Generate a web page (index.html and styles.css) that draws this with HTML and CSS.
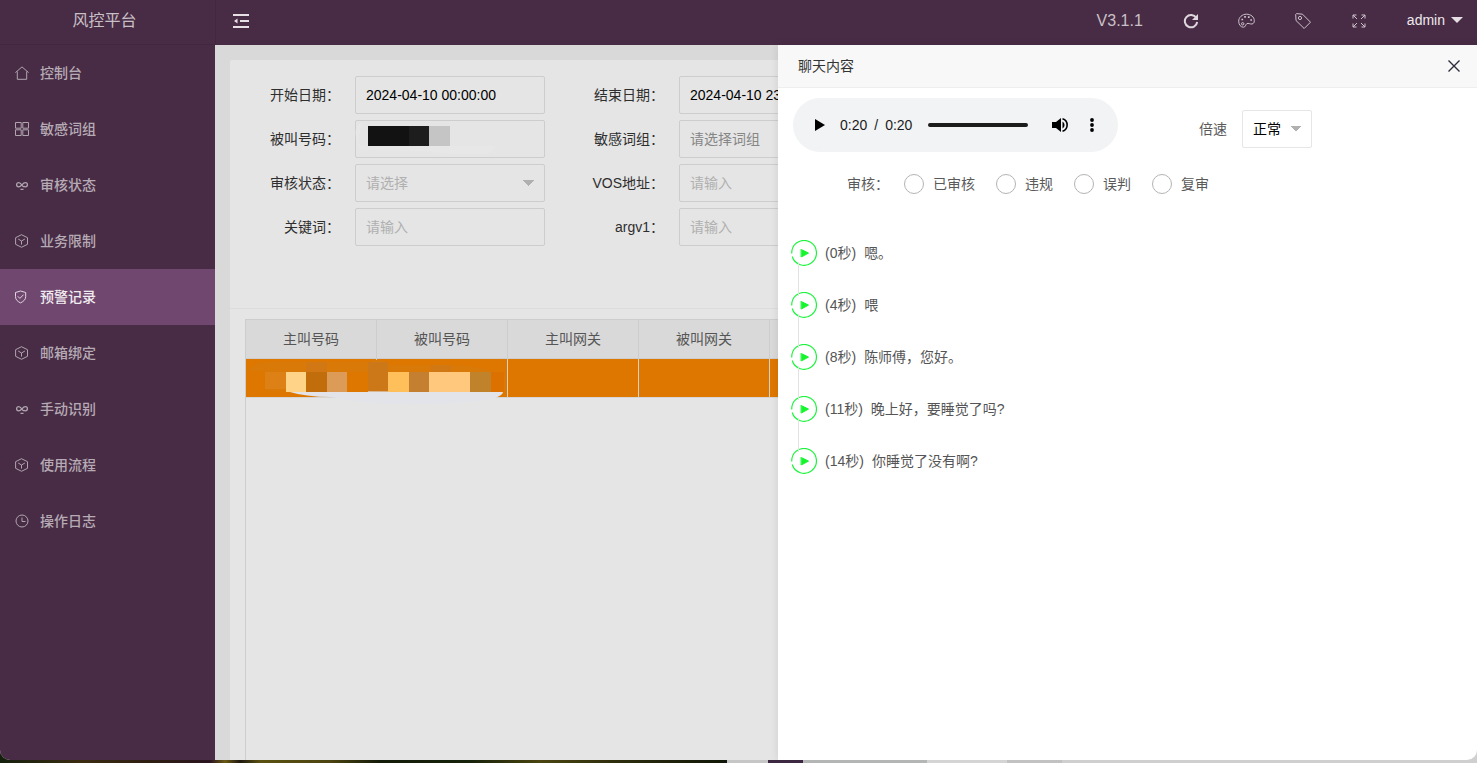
FILE: index.html
```
<!DOCTYPE html>
<html lang="zh-CN">
<head>
    <meta charset="UTF-8">
    <meta name="viewport" content="width=device-width, initial-scale=1.0">
    <title>风控平台</title>
    <link rel="stylesheet" href="styles.css">
</head>
<body>
    <!-- Shared icons -->
    <svg class="sprite" aria-hidden="true">
        <symbol id="i-cube" viewBox="0 0 14 14">
            <path d="M6.500 .7 12.500 3.700v6.600L6.500 13.300 .6 10.300V3.700z M3.200 5 6.500 7l3.400-2 M6.500 7v3.600"/>
        </symbol>
        <symbol id="i-link" viewBox="0 0 14 14">
            <path d="M9.600 8.300C8.700 9.200 7.800 8.300 7 7.200 5.900 5.700 5 4.700 3.700 4.700a2.100 2.100 0 0 0 0 4.200c1.300 0 2.200-.9 3.300-2.100 1.100-1.300 2-2.100 3.300-2.100a2.100 2.100 0 0 1 0 4.200c-.7 0-1.200-.2-1.700-.6 M5.500 11.300h3" stroke-width="1.300"/>
        </symbol>
        <symbol id="i-play" viewBox="0 0 26 26">
            <path d="M1.200 16.500A12.400 12.400 0 1 0 .9 10.500L.7 13.500" fill="none" stroke="#1cf53c" stroke-width="1.200"/>
            <path d="M10.300 9.500 17.500 13.100 10.300 17z" fill="#14f52e" stroke="#14f52e" stroke-linejoin="round"/>
            <path d="M9.700 9v8" stroke="#8dfb9a" stroke-width="1"/>
        </symbol>
    </svg>

    <div class="window">
        <!-- Side menu -->
        <aside class="side">
            <div class="logo">风控平台</div>
            <nav class="menu">
                <a href="#"><svg viewBox="0 0 14 14"><path d="M.4 6.600 7 .9l6.600 5.700 M2.300 5.500v7.800h9.400V5.500"/></svg>控制台</a>
                <a href="#"><svg viewBox="0 0 14 14"><path d="M.5.5h5.700v5.700H.5z M7.800.5h5.700v5.700H7.800z M.5 7.800h5.700v5.700H.5z M7.800 7.800h5.700v5.700H7.800z"/></svg>敏感词组</a>
                <a href="#"><svg><use href="#i-link"/></svg>审核状态</a>
                <a href="#"><svg><use href="#i-cube"/></svg>业务限制</a>
                <a href="#" class="active"><svg viewBox="0 0 14 14"><path d="M5.500 1 10.700 2.500v4.200c0 2.800-2 4.600-5.200 6.200C2.300 11.300.5 9.500.5 6.700V2.500z M2.800 6.300 4.900 8.400 8.500 4.700"/></svg>预警记录</a>
                <a href="#"><svg><use href="#i-cube"/></svg>邮箱绑定</a>
                <a href="#"><svg><use href="#i-link"/></svg>手动识别</a>
                <a href="#"><svg><use href="#i-cube"/></svg>使用流程</a>
                <a href="#"><svg viewBox="0 0 14 14"><path d="M7 1a6 6 0 1 0 0 12A6 6 0 1 0 7 1z M7 3.500V7.500h3.500"/></svg>操作日志</a>
            </nav>
        </aside>

        <div class="main">
            <header class="header">
                <button class="icon-btn" aria-label="收起菜单">
                    <svg width="16" height="14" viewBox="0 0 16 14"><path d="M0 1h16 M7 7h9 M0 13h16" fill="none" stroke="#e6e0e5" stroke-width="1.800"/><path d="M4.500 4.500v5L1 7z" fill="#e6e0e5"/></svg>
                </button>
                <div class="header-right">
                    <span class="version">V3.1.1</span>
                    <button class="icon-btn" aria-label="刷新">
                        <svg width="16" height="16" viewBox="0 0 16 16"><path d="M13.300 4.800A6.200 6.200 0 1 0 14.200 9" fill="none" stroke="#ded7dd" stroke-width="2"/><path d="M15 1v6H9z" fill="#ded7dd"/></svg>
                    </button>
                    <button class="icon-btn" aria-label="主题">
                        <svg width="17" height="16" viewBox="0 0 17 16" fill="none" stroke="#cdc3cc"><path d="M8.500 1.200C4.200 1.200.7 4.300.7 8.200c0 3.500 2.100 6 4.700 6 2.300 0 2-2.600 3.400-3.500 1.600-1 3.300.6 5.200.3 1.600-.3 2.300-1.600 2.300-3.200C16.300 4 12.900 1.200 8.500 1.200z"/><circle cx="4.700" cy="10.800" r="1.200"/><path d="M3.400 6.500h1.700 M6.200 3.900h1.700 M9.900 4.200h1.700 M12.300 7h1.700" stroke-width="1.700"/></svg>
                    </button>
                    <button class="icon-btn" aria-label="标签">
                        <svg width="16" height="16" viewBox="0 0 16 16" fill="none" stroke="#cdc3cc"><path d="M.7 1.500 1 7.500l8.200 8 6.300-6.300-8-8L1.500.6z"/><circle cx="5" cy="5" r="1.600"/></svg>
                    </button>
                    <button class="icon-btn" aria-label="全屏">
                        <svg width="14" height="14" viewBox="0 0 14 14" fill="none" stroke="#cdc3cc"><path d="M1 4.500V1h3.500 M1 1l4 4 M9.500 1H13v3.500 M13 1 9 5 M1 9.500V13h3.500 M1 13l4-4 M13 9.500V13H9.500 M13 13 9 9"/></svg>
                    </button>
                    <a href="#" class="user">admin<span class="caret"></span></a>
                </div>
            </header>

            <div class="content">
                <div class="card">
                    <form class="search">
                        <div class="item">
                            <label for="start">开始日期：</label>
                            <input type="text" id="start" value="2024-04-10 00:00:00">
                        </div>
                        <div class="item">
                            <label for="end">结束日期：</label>
                            <input type="text" id="end" value="2024-04-10 23:59:59">
                        </div>
                        <div class="item masked">
                            <label for="callee">被叫号码：</label>
                            <input type="text" id="callee">
                            <svg class="mask" width="150" height="38" viewBox="0 0 150 38">
                                <path d="M8 3C-1 4 0 22 8 26H142L134 34Q110 36 75 31L14 30Q6 30 3 26z" fill="#e7e7e7"/>
                                <path d="M14 6h41v20H14z" fill="#121212"/>
                                <path d="M55 6h20v20H55z" fill="#1d1d1d"/>
                                <path d="M75 6h21v20H75z" fill="#c5c5c5"/>
                            </svg>
                        </div>
                        <div class="item">
                            <label for="group">敏感词组：</label>
                            <select id="group" class="group"><option>请选择词组</option></select>
                        </div>
                        <div class="item">
                            <label for="status">审核状态：</label>
                            <select id="status"><option>请选择</option></select>
                        </div>
                        <div class="item">
                            <label for="vos">VOS地址：</label>
                            <input type="text" id="vos" placeholder="请输入">
                        </div>
                        <div class="item">
                            <label for="keyword">关键词：</label>
                            <input type="text" id="keyword" placeholder="请输入">
                        </div>
                        <div class="item">
                            <label for="argv1">argv1：</label>
                            <input type="text" id="argv1" placeholder="请输入">
                        </div>
                    </form>

                    <div class="table-box">
                        <table>
                            <thead>
                                <tr>
                                    <th>主叫号码</th>
                                    <th>被叫号码</th>
                                    <th>主叫网关</th>
                                    <th>被叫网关</th>
                                    <th></th>
                                </tr>
                            </thead>
                            <tbody>
                                <tr>
                                    <td></td>
                                    <td></td>
                                    <td></td>
                                    <td></td>
                                    <td></td>
                                </tr>
                            </tbody>
                        </table>
                        <svg class="mosaic" width="262" height="48" viewBox="0 0 262 48">
                            <path d="M2 12Q8 3 20 3H125V1h12v5h60q50 0 62 15v11H20V12z" fill="#d87908"/>
                            <path d="M60 3h21v10H60z M185 6h20v7h-20z" fill="#d17714"/>
                            <path d="M122 3h20v30h-20z" fill="#cc7718"/>
                            <path d="M40 32Q60 38 85 38Q130 47 180 45Q225 44 249 39Q257 36 257 33z" fill="#e2e4ea"/>
                            <path d="M19 13h21v17H19z" fill="#dd8117"/>
                            <path d="M40 13h20v20H40z" fill="#ffd488"/>
                            <path d="M60 13h21v20H60z" fill="#c26d0b"/>
                            <path d="M81 13h20v20H81z" fill="#dc9b57"/>
                            <path d="M101 13h21v20h-21z" fill="#de7700"/>
                            <path d="M142 13h21v20h-21z" fill="#ffbf5a"/>
                            <path d="M163 13h20v20h-20z" fill="#c57f30"/>
                            <path d="M183 13h41v20h-41z" fill="#ffc87d"/>
                            <path d="M224 13h21v20h-21z" fill="#c0832b"/>
                            <path d="M245 13h13v20h-13z" fill="#dc7100"/>
                        </svg>
                    </div>
                </div>
            </div>
        </div>

        <!-- Chat drawer -->
        <section class="drawer">
            <div class="drawer-title">
                <span>聊天内容</span>
                <button aria-label="关闭"><svg width="12" height="12" viewBox="0 0 12 12"><path d="M.5.5l11 11 M11.500.5l-11 11" fill="none" stroke="#2e2d3c" stroke-width="1.400"/></svg></button>
            </div>
            <div class="drawer-body">
                <div class="player-row">
                    <div class="player">
                        <button class="play" aria-label="播放"><svg width="10" height="12" viewBox="0 0 10 12"><path d="M0 0 10 6 0 12z"/></svg></button>
                        <div class="time"><span>0:20</span><span>/</span><span>0:20</span></div>
                        <input type="range" aria-label="进度" min="0" max="20" value="20">
                        <button class="volume" aria-label="音量"><svg width="17" height="16" viewBox="0 0 17 16"><path d="M0 5v6h4l5 4V1L4 5z"/><path d="M10.500 4.500v7a4 4 0 0 0 0-7z"/><path d="M10.500 1.700a6.600 6.600 0 0 1 0 12.600" fill="none" stroke="#000" stroke-width="1.600"/></svg></button>
                        <button class="more" aria-label="更多"><svg width="4" height="14" viewBox="0 0 4 14"><circle cx="2" cy="2" r="1.900"/><circle cx="2" cy="7" r="1.900"/><circle cx="2" cy="12" r="1.900"/></svg></button>
                    </div>
                    <div class="speed">
                        <label for="speed">倍速</label>
                        <select id="speed"><option>正常</option></select>
                    </div>
                </div>

                <div class="audit">
                    <span class="audit-label">审核：</span>
                    <label><input type="radio" name="audit">已审核</label>
                    <label><input type="radio" name="audit">违规</label>
                    <label><input type="radio" name="audit">误判</label>
                    <label><input type="radio" name="audit">复审</label>
                </div>

                <ul class="timeline">
                    <li><svg><use href="#i-play"/></svg><span>(0秒)</span><span>嗯。</span></li>
                    <li><svg><use href="#i-play"/></svg><span>(4秒)</span><span>喂</span></li>
                    <li><svg><use href="#i-play"/></svg><span>(8秒)</span><span>陈师傅，您好。</span></li>
                    <li><svg><use href="#i-play"/></svg><span>(11秒)</span><span>晚上好，要睡觉了吗?</span></li>
                    <li><svg><use href="#i-play"/></svg><span>(14秒)</span><span>你睡觉了没有啊?</span></li>
                </ul>
            </div>
        </section>
    </div>
</body>
</html>
```
FILE: styles.css
```
* {
    box-sizing: border-box;
}
body {
    margin: 0;
    height: 100vh;
    padding-bottom: 3px;
    font: 14px/20px "Liberation Sans", "Noto Sans CJK SC", sans-serif;
    color: #333;
    /* desktop strip under the window */
    background: linear-gradient(to right, #14200d 0, #3a2b10 80px, #2c1c12 160px, #2a1420 210px, #6a5a14 225px, #1e1810 240px, #5a5010 260px, #4c4410 330px, #121a08 380px, #16220a 470px, #4a4410 540px, #2c2c0c 620px, #0e1606 727px, #c6c6c6 727px, #c6c6c6 768px, #3b2740 768px, #3b2740 803px, #b4b6b5 803px, #b4b6b5 927px, #d4d4d4 927px, #d4d4d4 1007px, #c2c2c2 1007px, #c2c2c2 1062px, #cfcfcf 1062px);
}
input, select, button {
    font: inherit;
    color: inherit;
}
button {
    padding: 0;
    border: none;
    background: none;
    cursor: pointer;
}
svg {
    display: block;
}
a {
    text-decoration: none;
}
.sprite {
    position: absolute;
    width: 0;
    height: 0;
}
.window {
    position: relative;
    display: flex;
    height: 100%;
    overflow: hidden;
    border-radius: 0 0 10px 10px;
    background: #d9d9d9;
}

/* side menu */
.side {
    width: 215px;
    flex: none;
    background: #482c45;
}
.logo {
    height: 45px;
    padding-right: 6px;
    border-bottom: 1px solid #42273f;
    line-height: 42px;
    font-size: 16px;
    text-align: center;
    color: #c8c0c7;
}
.menu a {
    display: flex;
    align-items: center;
    height: 56px;
    padding-left: 15px;
    font-weight: 500;
    color: #b6abb5;
}
.menu svg {
    width: 14px;
    height: 14px;
    margin-right: 11px;
    fill: none;
    stroke: #b0a5af;
}
.menu .active {
    background: #70476f;
    color: #f0ecf0;
}
.menu .active svg {
    stroke: #e0d8e0;
}

/* top bar */
.main {
    display: flex;
    flex-direction: column;
    flex: 1;
    min-width: 0;
}
.header {
    display: flex;
    justify-content: space-between;
    height: 45px;
    padding-bottom: 3px;
    padding-right: 14px;
    border-left: 1px solid #42273f;
    background: #482c45;
}
.icon-btn {
    display: flex;
    align-items: center;
    justify-content: center;
    width: 50px;
}
.header-right {
    display: flex;
    align-items: center;
}
.header-right .icon-btn {
    width: 56px;
    height: 42px;
}
.version {
    margin-right: 20px;
    font-size: 16px;
    color: #c8c0c7;
}
.user {
    display: flex;
    align-items: center;
    margin-left: 20px;
    padding-bottom: 2px;
    color: #eee9ed;
}
.caret {
    margin-left: 6px;
    border: 6px solid transparent;
    border-top-color: #e6e0e5;
    border-bottom: none;
}

/* search form and table */
.content {
    flex: 1;
    padding: 15px 15px 0;
    min-height: 0;
}
.card {
    display: flex;
    flex-direction: column;
    height: 100%;
    border-radius: 2px 2px 0 0;
    background: #e5e5e5;
}
.search {
    display: grid;
    grid-template-columns: 300px 300px;
    gap: 6px 24px;
    padding: 16px 15px 62px;
    border-bottom: 1px solid #dcdcdc;
}
.item {
    display: flex;
    align-items: center;
}
.item label {
    width: 110px;
    padding-right: 15px;
    text-align: right;
    color: #2e2e2e;
}
.item input,
.item select,
.speed select {
    width: 190px;
    height: 38px;
    padding: 0 10px;
    border: 1px solid #cdcdcd;
    border-radius: 2px;
    background: transparent;
    color: #000;
    outline: none;
}
.item input::placeholder {
    color: #b0b0b0;
}
/* two half triangles make the arrow */
.item select,
.speed select {
    appearance: none;
    background: linear-gradient(to bottom right, #b0b0b0 50%, transparent 50%) right 9px center / 6px 6px no-repeat, linear-gradient(to bottom left, #b0b0b0 50%, transparent 50%) right 15px center / 6px 6px no-repeat;
}
.item select {
    color: #b0b0b0;
}
.item .group {
    color: #868686;
}
.masked {
    position: relative;
}
.mask {
    position: absolute;
    left: 109px;
    top: 0;
}
.table-box {
    position: relative;
    flex: 1;
    margin: 10px 15px 0;
    border: 1px solid #cdcdcd;
    border-bottom: none;
}
table {
    width: 100%;
    table-layout: fixed;
    border-collapse: separate;
    border-spacing: 0;
}
th {
    width: 131px;
    height: 39px;
    padding: 0;
    border-right: 1px solid #cdcdcd;
    border-bottom: 1px solid #cdcdcd;
    background: #d9d9d9;
    font-weight: normal;
    color: #555;
}
th:last-child {
    width: auto;
}
td {
    height: 39px;
    border-right: 1px solid #dcd2c4;
    border-bottom: 1px solid #d5d5d5;
    background: #de7700;
}
.mosaic {
    position: absolute;
    left: 0;
    top: 39px;
}

/* chat drawer */
.drawer {
    position: absolute;
    top: 45px;
    right: 0;
    bottom: 0;
    width: 699px;
    background: #fff;
    box-shadow: 0 0 8px rgba(0, 0, 0, 0.1);
}
.drawer-title {
    display: flex;
    align-items: center;
    justify-content: space-between;
    height: 43px;
    padding: 0 17px 0 20px;
    border-bottom: 1px solid #eee;
    background: #f8f8f8;
}
.drawer-body {
    padding: 10px 15px;
    color: #5a5a5a;
}
.player-row {
    display: flex;
    align-items: center;
    gap: 81px;
}
.player {
    display: flex;
    align-items: center;
    width: 325px;
    height: 54px;
    padding: 0 24px 0 22px;
    border-radius: 27px;
    background: #f1f3f4;
    color: #1c1c1c;
}
.time {
    display: flex;
    gap: 7px;
    margin: 0 16px 0 15px;
}
.player input {
    appearance: none;
    flex: 1;
    min-width: 0;
    height: 4px;
    margin: 0;
    border-radius: 2px;
    background: #1c1c1c;
}
.player input::-webkit-slider-thumb {
    appearance: none;
    width: 0;
    height: 0;
}
.volume {
    margin: 0 21px 0 24px;
}
.speed {
    display: flex;
    align-items: center;
    gap: 15px;
    padding-top: 8px;
}
.speed select {
    width: 70px;
    border-color: #e6e6e6;
    background-color: #fff;
}
.audit {
    display: flex;
    align-items: center;
    gap: 21px;
    margin: 22px 0 0 54px;
}
.audit-label {
    margin-right: -6px;
}
.audit label {
    display: flex;
    align-items: center;
    gap: 9px;
}
.audit input {
    appearance: none;
    width: 20px;
    height: 20px;
    margin: 0;
    border: 1px solid #b4b4b4;
    border-radius: 50%;
}
.timeline {
    margin: 46px 0 0;
    padding: 0;
    list-style: none;
}
.timeline li {
    position: relative;
    display: flex;
    align-items: center;
    gap: 8px;
    height: 26px;
    margin: 0 0 26px -2px;
    color: #555;
}
/* line between two entries */
.timeline li + li::before {
    content: "";
    position: absolute;
    left: 7px;
    top: -30px;
    height: 34px;
    border-left: 1px solid #e2e2e2;
}
.timeline svg {
    width: 26px;
    height: 26px;
}
```
